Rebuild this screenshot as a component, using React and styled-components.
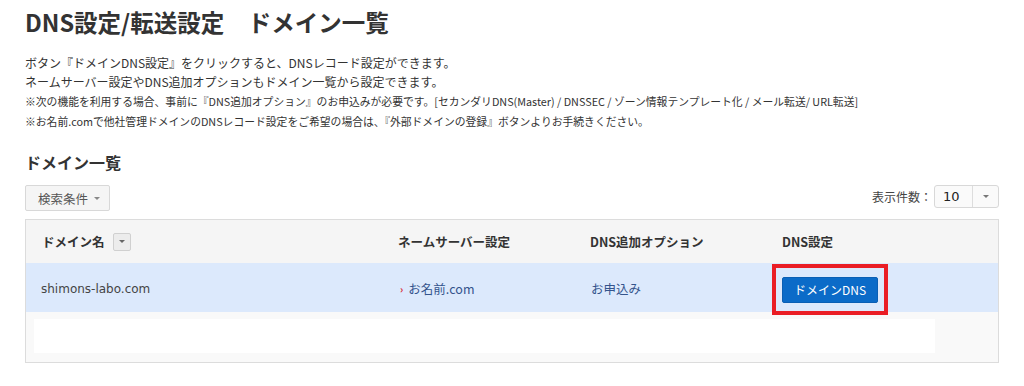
import React from 'react';
import styled, { createGlobalStyle } from 'styled-components';

const GlobalStyle = createGlobalStyle`
    body {
        margin: 0;
        background: #fff;
        color: #333;
        font-family: "DejaVu Sans", "Noto Sans CJK JP", sans-serif;
    }
`;

const Page = styled.div`
    width: 1024px;
    height: 386px;
    padding: 0 25px;
    box-sizing: border-box;
    overflow: hidden;
`;

const Title = styled.h1`
    margin: 0;
    padding-top: 8px;
    font-size: 23.5px;
    line-height: 29px;
    font-weight: bold;
    font-family: "Noto Sans CJK JP", sans-serif;
    color: #333;
`;

const Lead = styled.p`
    margin: 16px 0 0;
    font-size: 12px;
    line-height: 19px;
    font-family: "Noto Sans CJK JP", sans-serif;
`;

const Note = styled.p`
    margin: 0;
    font-size: 10.8px;
    line-height: 20px;
    font-family: "Noto Sans CJK JP", sans-serif;
`;

const SubTitle = styled.h2`
    margin: 19px 0 0;
    font-size: 16px;
    line-height: 24px;
    font-weight: bold;
    font-family: "Noto Sans CJK JP", sans-serif;
`;

const Toolbar = styled.div`
    display: flex;
    justify-content: space-between;
    align-items: flex-start;
    margin-top: 11px;
`;

const FilterButton = styled.button`
    display: flex;
    align-items: center;
    gap: 6px;
    height: 26px;
    padding: 0 9px 0 12px;
    border: 1px solid #d8d8d8;
    border-radius: 2px;
    background: #f5f5f5;
    color: #555;
    font-size: 12.5px;
    font-family: "Noto Sans CJK JP", sans-serif;
`;

const Caret = styled.span`
    width: 0;
    height: 0;
    border-left: 3px solid transparent;
    border-right: 3px solid transparent;
    border-top: 3px solid ${p => p.$color || '#888'};
`;

const PerPage = styled.div`
    display: flex;
    align-items: center;
    gap: 2px;
    font-size: 12px;
    color: #444;
    font-family: "Noto Sans CJK JP", sans-serif;
`;

const Select = styled.div`
    display: flex;
    width: 65px;
    height: 23px;
    box-sizing: border-box;
    border: 1px solid #d8d8d8;
    border-radius: 3px;
    background: #fafafa;
`;

const SelectValue = styled.span`
    flex: 1;
    padding-left: 8px;
    font-size: 13px;
    line-height: 21px;
    color: #222;
    font-family: "DejaVu Sans", sans-serif;
`;

const SelectArrow = styled.span`
    width: 25px;
    border-left: 1px solid #ddd;
    display: flex;
    align-items: center;
    justify-content: center;
`;

const Table = styled.div`
    margin-top: 8px;
    border: 1px solid #dcdcdc;
    background: #f9f9f9;
`;

const Row = styled.div`
    display: grid;
    grid-template-columns: 356px 192px 192px 1fr;
    align-items: center;
    height: ${p => p.$h}px;
    background: ${p => p.$bg};
`;

const HeadCell = styled.div`
    display: flex;
    align-items: center;
    gap: 8px;
    padding-left: 16px;
    font-size: 12.5px;
    font-weight: bold;
    color: #333;
    font-family: "Noto Sans CJK JP", sans-serif;
`;

const SortButton = styled.span`
    width: 18px;
    height: 18px;
    box-sizing: border-box;
    border: 1px solid #d0d0d0;
    border-radius: 2px;
    background: #ececec;
    display: flex;
    align-items: center;
    justify-content: center;
`;

const Cell = styled.div`
    padding-left: ${p => p.$pad ?? 16}px;
    font-size: 12.5px;
    color: ${p => p.$link ? '#34548c' : '#444'};
    font-family: ${p => p.$latin ? '"DejaVu Sans", sans-serif' : '"Noto Sans CJK JP", sans-serif'};
    ${p => p.$latin && 'font-size: 12px;'}
    display: flex;
    align-items: center;
    gap: 5px;
`;

const Arrow = styled.span`
    color: #d9232d;
    font-size: 10px;
    font-weight: bold;
`;

const Highlight = styled.div`
    margin-left: 6px;
    width: 116px;
    height: 51px;
    box-sizing: border-box;
    border: 4px solid #ea1d25;
    display: flex;
    align-items: center;
    justify-content: center;
    transform: translateY(1px);
`;

const DnsButton = styled.button`
    width: 96px;
    height: 26px;
    border: 1px solid #0a5fb4;
    border-radius: 2px;
    background: #0b6bc8;
    color: #fff;
    font-size: 12px;
    font-family: "Noto Sans CJK JP", sans-serif;
    padding: 0;
`;

const EmptyRow = styled.div`
    padding: 7px 0 9px 8px;
`;

const EmptyBox = styled.div`
    width: 901px;
    height: 34px;
    background: #fff;
`;

export default function App() {
    return (
        <Page>
            <GlobalStyle />
            <Title>DNS設定/転送設定　ドメイン一覧</Title>
            <Lead>
                ボタン『ドメインDNS設定』をクリックすると、DNSレコード設定ができます。<br />
                ネームサーバー設定やDNS追加オプションもドメイン一覧から設定できます。
            </Lead>
            <Note>※次の機能を利用する場合、事前に『DNS追加オプション』のお申込みが必要です。[セカンダリDNS(Master) / DNSSEC / ゾーン情報テンプレート化 / メール転送/ URL転送]</Note>
            <Note>※お名前.comで他社管理ドメインのDNSレコード設定をご希望の場合は、『外部ドメインの登録』ボタンよりお手続きください。</Note>

            <SubTitle>ドメイン一覧</SubTitle>
            <Toolbar>
                <FilterButton>検索条件 <Caret /></FilterButton>
                <PerPage>
                    表示件数：
                    <Select>
                        <SelectValue>10</SelectValue>
                        <SelectArrow><Caret $color="#777" /></SelectArrow>
                    </Select>
                </PerPage>
            </Toolbar>

            <Table>
                <Row $h={43} $bg="#f5f5f5">
                    <HeadCell>ドメイン名 <SortButton><Caret $color="#666" /></SortButton></HeadCell>
                    <HeadCell>ネームサーバー設定</HeadCell>
                    <HeadCell>DNS追加オプション</HeadCell>
                    <HeadCell>DNS設定</HeadCell>
                </Row>
                <Row $h={49} $bg="#dce9fc">
                    <Cell $latin $pad={15}>shimons-labo.com</Cell>
                    <Cell $link $pad={18}><Arrow>›</Arrow>お名前.com</Cell>
                    <Cell $link $pad={17}>お申込み</Cell>
                    <Cell $pad={0}>
                        <Highlight><DnsButton>ドメインDNS</DnsButton></Highlight>
                    </Cell>
                </Row>
                <EmptyRow><EmptyBox /></EmptyRow>
            </Table>
        </Page>
    );
}
